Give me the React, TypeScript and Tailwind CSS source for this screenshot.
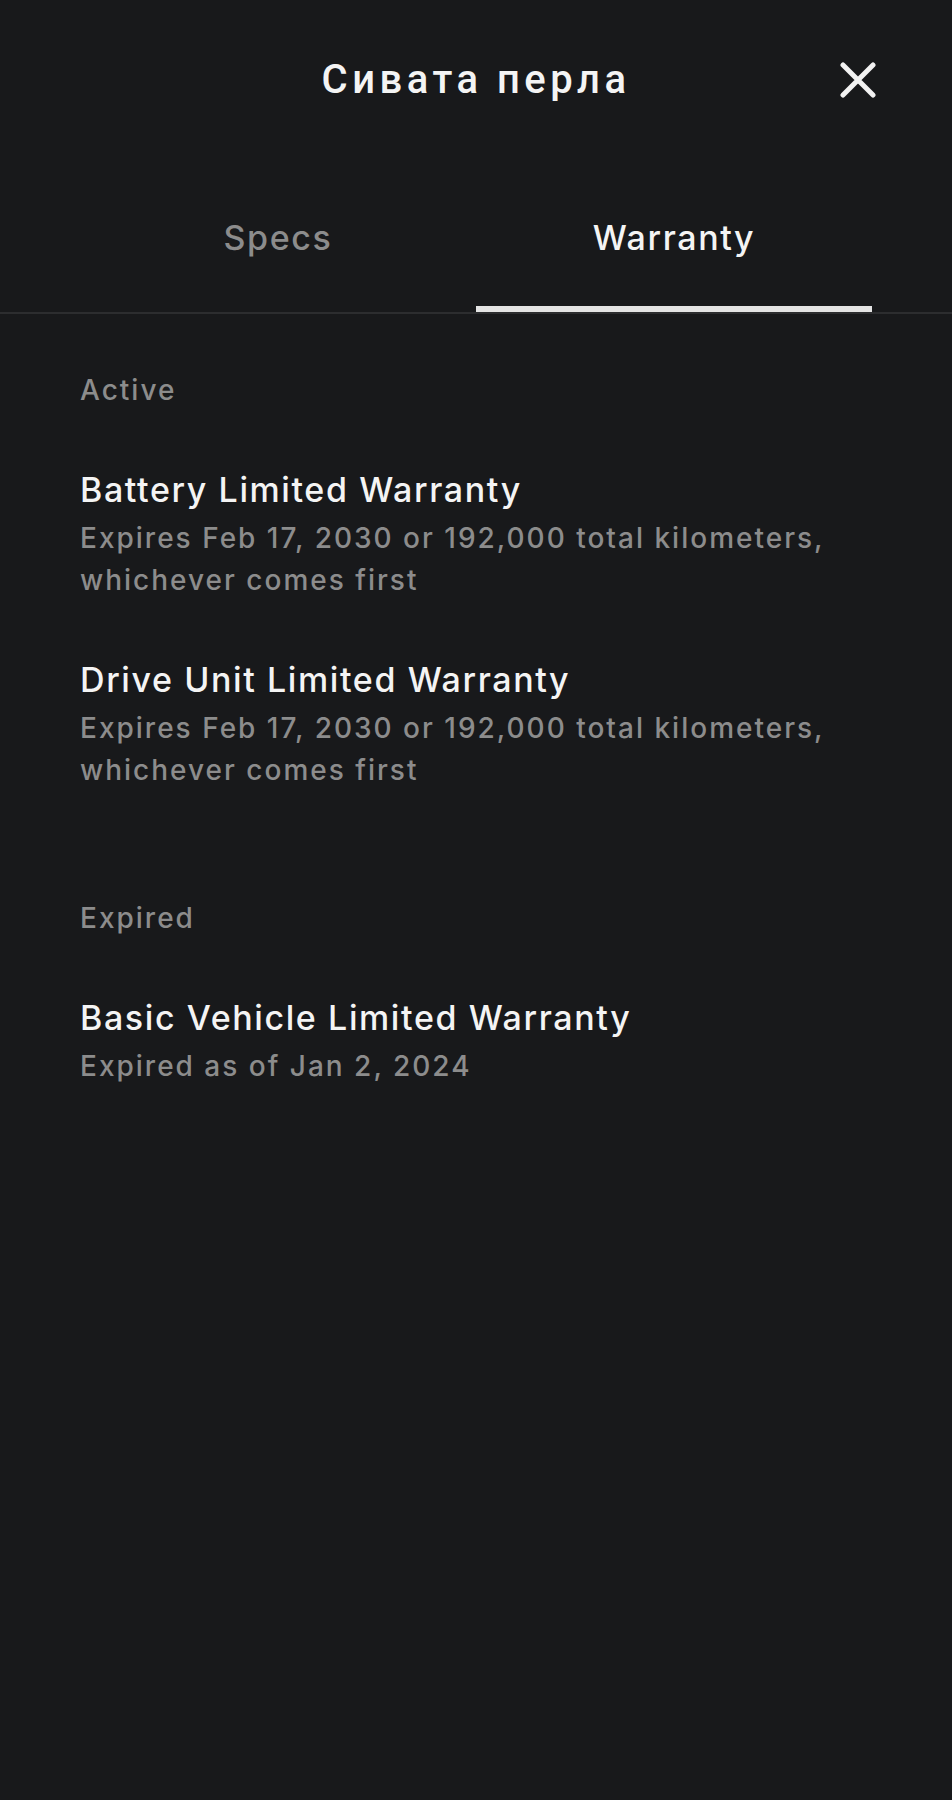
import React from 'react';

type Item = { title: string; detail: string };

const active: Item[] = [
  { title: 'Battery Limited Warranty', detail: 'Expires Feb 17, 2030 or 192,000 total kilometers, whichever comes first' },
  { title: 'Drive Unit Limited Warranty', detail: 'Expires Feb 17, 2030 or 192,000 total kilometers, whichever comes first' },
];

const expired: Item[] = [
  { title: 'Basic Vehicle Limited Warranty', detail: 'Expired as of Jan 2, 2024' },
];

const CloseIcon = () => (
  <svg width="36" height="36" viewBox="0 0 36 36" fill="none">
    <path d="M3 3L33 33M33 3L3 33" stroke="#f2f2f2" strokeWidth="5" strokeLinecap="round" />
  </svg>
);

const Section = ({ label, items }: { label: string; items: Item[] }) => (
  <div className="flex flex-col gap-[56px]">
    <div className="text-[28px] leading-[42px] font-medium tracking-[2px] text-[#8c8c8c]">{label}</div>
    {items.map((item) => (
      <div key={item.title} className="flex flex-col">
        <div className="text-[34px] leading-[46px] font-medium tracking-[1.6px] text-[#f4f4f4]">{item.title}</div>
        <div className="mt-1 text-[28px] leading-[42px] font-medium tracking-[2px] text-[#8c8c8c]">{item.detail}</div>
      </div>
    ))}
  </div>
);

const App: React.FC = () => {
  return (
    <div className="min-h-[1800px] w-full bg-[#18191b] font-['Inter',sans-serif]">
      {/* Header */}
      <div className="flex items-start justify-between pt-[56px] pb-[56px] px-[76px]">
        <div className="w-9" />
        <h1 className="text-[40px] leading-[48px] font-medium tracking-[4.5px] text-[#f4f4f4] font-['Roboto',sans-serif]">Сивата перла</h1>
        <button className="mt-[6px]">
          <CloseIcon />
        </button>
      </div>

      {/* Tabs */}
      <div className="border-b-2 border-[#2c2d2f]">
        <div className="mx-[80px] grid grid-cols-2">
          <div className="pt-[55px] pb-[45px] text-center text-[34px] leading-[46px] font-medium tracking-[1.6px] text-[#8c8c8c] border-b-[6px] border-transparent">
            Specs
          </div>
          <div className="pt-[55px] pb-[45px] text-center text-[34px] leading-[46px] font-medium tracking-[1.6px] text-[#f4f4f4] border-b-[6px] border-[#e4e4e4]">
            Warranty
          </div>
        </div>
      </div>

      {/* Warranty list */}
      <div className="flex flex-col gap-[106px] px-[80px] pt-[55px]">
        <Section label="Active" items={active} />
        <Section label="Expired" items={expired} />
      </div>
    </div>
  );
};

export default App;
